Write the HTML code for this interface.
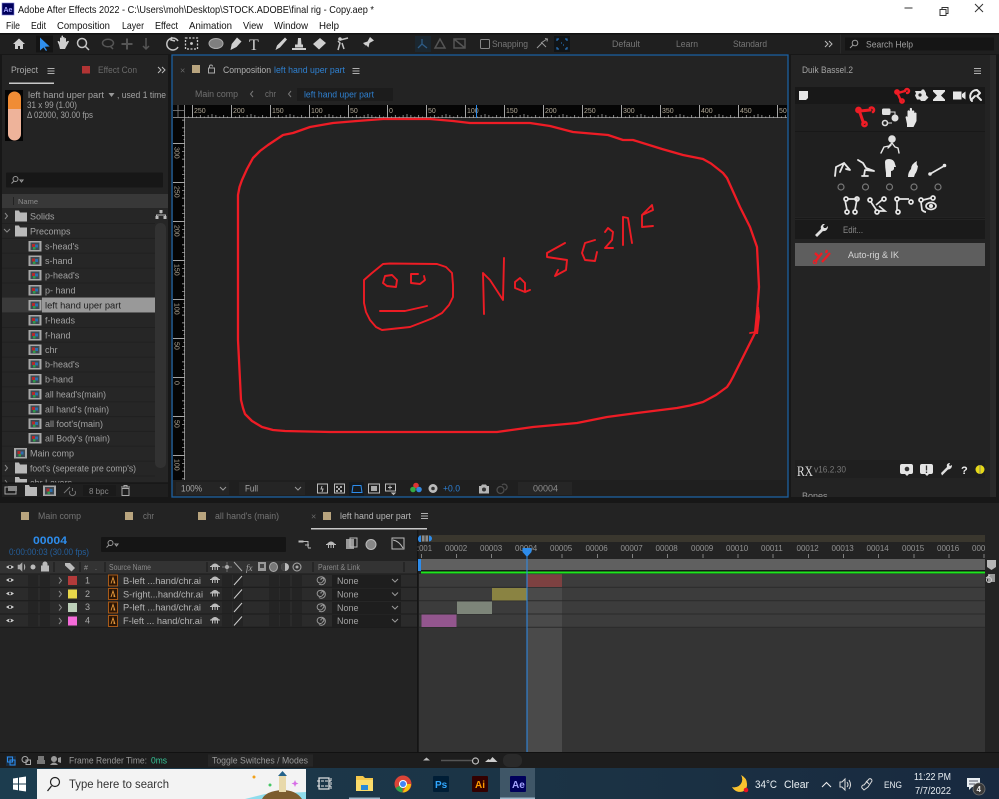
<!DOCTYPE html>
<html><head><meta charset="utf-8"><title>After Effects</title>
<style>
html,body{margin:0;padding:0;background:#1a1a1a;width:999px;height:799px;overflow:hidden}
svg{display:block;filter:blur(.3px)}
text{font-family:"Liberation Sans",sans-serif;font-size:9px;fill:#a2a2a2;white-space:pre}
.m{font-size:10.500px;fill:#111}
.d{fill:#6a6a6a}
.b{fill:#2d8ceb}
.w{fill:#c8c8c8}
.r{font-size:7px;fill:#b0a795}
.ti{font-size:8px;fill:#929292}
.i{fill:none;stroke:#c4c4c4;stroke-width:1.500}
.dim{fill:none;stroke:#555;stroke-width:1.500}
.f{fill:#cfcfcf}
.ic{fill:none;stroke:#e6e6e6;stroke-width:2;stroke-linecap:round;stroke-linejoin:round}
.red{fill:none;stroke:#ee1c25;stroke-width:2.400;stroke-linecap:round;stroke-linejoin:round}
.out{fill:none;stroke:#ee1c25;stroke-width:2.300;stroke-linecap:round;stroke-linejoin:round}
.sk{fill:none;stroke:#ed1c24;stroke-width:1.900;stroke-linejoin:round;stroke-linecap:round}
</style></head><body>
<svg xmlns="http://www.w3.org/2000/svg" width="999" height="799" viewBox="0 0 999 799">
<defs>
<g id="comp"><rect width="13" height="10.500" fill="#a8a8a8"/><rect x="2" y="1.500" width="9" height="7.500" fill="#3f4a52"/><rect x="3.500" y="3" width="3" height="3" fill="#b52a2a"/><rect x="6.500" y="3.500" width="3" height="3" fill="#2b6fb0"/><rect x="4.500" y="6" width="2.500" height="2.500" fill="#2f9a48"/></g>
<g id="folder"><path d="M0 0h4l1 2h7v9H0z" fill="#b9b9b9"/></g>
<g id="ham"><path d="M0 .5h7M0 3h7M0 5.500h7" stroke="#b0b0b0" stroke-width="1"/></g>
<g id="eye"><path d="M-4 0Q0-3.500 4 0Q0 3.500-4 0z" fill="#cfcfcf"/><circle r="1.200" fill="#222"/></g>
<g id="ai"><rect x="-4.500" y="-5.500" width="9" height="11" fill="#2a1505" stroke="#a85a18"/><path d="M-2 3L0-3L2 3M1 0v3" stroke="#e79a3c" stroke-width=".9" fill="none"/></g>
<g id="shy"><path d="M-4 0Q0-5 4 0z" fill="#bbb"/><path d="M-5 .5h10M-2.500 1v3M0 1v3M2.500 1v3" stroke="#bbb" fill="none"/></g>
<g id="spiral"><path d="M-1 0a1.500 1.500 0 1 1 2 1a3 3 0 1 1-3-4a4 4 0 1 1-1 7" fill="none" stroke="#999" stroke-width="1"/></g>
<g id="chev"><path d="M-3-1.500L0 1.500L3-1.500" fill="none" stroke="#999"/></g>
<pattern id="hr" x="192" y="105" width="39" height="13" patternUnits="userSpaceOnUse"><path d="M.5 0v13" stroke="#ccc" stroke-width=".8"/><path d="M8.300 10v3M16.100 10v3M23.900 10v3M31.700 10v3M4.400 11.500v1.500M12.200 11.500v1.500M20 9v4M27.800 11.500v1.500M35.600 11.500v1.500" stroke="#bbb" stroke-width=".7"/></pattern>
<pattern id="vr" x="172" y="143" width="13" height="39" patternUnits="userSpaceOnUse"><path d="M0 .5h13" stroke="#ccc" stroke-width=".8"/><path d="M10 8.300h3M10 16.100h3M10 23.900h3M10 31.700h3M11.500 4.400h1.500M11.500 12.200h1.500M11.500 27.800h1.500M11.500 35.600h1.500" stroke="#bbb" stroke-width=".7"/></pattern>
</defs>

<!-- base -->
<rect width="999" height="799" fill="#171717"/>

<!-- title + menu -->
<rect width="999" height="33" fill="#fff"/>
<rect x="2" y="3" width="12" height="12" fill="#00005b" stroke="#7d7dd8" stroke-width=".6"/>
<text x="3.500" y="12" style="font-size:7px;fill:#a5a5ff;font-weight:bold">Ae</text>
<text x="18" y="13" textLength="356" lengthAdjust="spacingAndGlyphs" style="font-size:10.500px;fill:#111">Adobe After Effects 2022 - C:\Users\moh\Desktop\STOCK.ADOBE\final rig - Copy.aep *</text>
<text class="m" x="6" y="29" textLength="14" lengthAdjust="spacingAndGlyphs">File</text>
<text class="m" x="31" y="29" textLength="15" lengthAdjust="spacingAndGlyphs">Edit</text>
<text class="m" x="57" y="29" textLength="53" lengthAdjust="spacingAndGlyphs">Composition</text>
<text class="m" x="122" y="29" textLength="22" lengthAdjust="spacingAndGlyphs">Layer</text>
<text class="m" x="155" y="29" textLength="23" lengthAdjust="spacingAndGlyphs">Effect</text>
<text class="m" x="189" y="29" textLength="43" lengthAdjust="spacingAndGlyphs">Animation</text>
<text class="m" x="243" y="29" textLength="20" lengthAdjust="spacingAndGlyphs">View</text>
<text class="m" x="274" y="29" textLength="34" lengthAdjust="spacingAndGlyphs">Window</text>
<text class="m" x="319" y="29" textLength="20" lengthAdjust="spacingAndGlyphs">Help</text>
<path d="M904.500 8h8" stroke="#333" stroke-width="1"/>
<path d="M940 9.500h6v6h-6zM942 9.500v-2h6v6h-2" fill="none" stroke="#333" stroke-width="1"/>
<path d="M975 4l8 8M983 4l-8 8" stroke="#333" stroke-width="1"/>

<!-- toolbar -->
<rect y="33" width="999" height="1.500" fill="#111"/>
<rect y="34.500" width="999" height="19.500" fill="#1f1f1f"/>
<path d="M13 44l6-5.500l6 5.500h-2v5h-3v-3h-2v3h-3v-5z" class="f"/>
<rect x="36" y="35.500" width="17" height="17" fill="#141414"/>
<path d="M40 37.500v13l3.500-3l2.500 3.500l1-.8l-2.300-3.500l5-.2z" fill="#2f8fee"/>
<path d="M59 45l-1.500-3.500q1-1 2 0l.5 1v-4.500q1-1 1.500 0v-2q1-1 1.500 0v1.500q1-1 1.500 0v1q1-1 1.500 0v3.500l1.500-1q1-.5 1.500.5l-3 5.500l-1 2h-5z" class="f"/>
<circle cx="82" cy="43" r="4.500" class="i"/><path d="M85.500 46.500l3.500 3.500" class="i"/>
<ellipse cx="108" cy="43" rx="5.500" ry="3.800" class="dim"/><path d="M110 46l3 3" class="dim"/>
<path d="M127 38.500v11M121.500 44h11" stroke="#555" stroke-width="2"/>
<path d="M146 38v11M143 46l3 3l3-3" class="dim"/>
<path d="M178 41a6 6 0 1 0 0 6M172 37l-1 3l4 1" class="i"/>
<rect x="185.500" y="38" width="12" height="11" fill="none" stroke="#ccc" stroke-width="1.300" stroke-dasharray="2 1.500"/><circle cx="191.500" cy="43.500" r="1.400" class="f"/>
<ellipse cx="216" cy="43.500" rx="7" ry="5" fill="#7f7f7f" stroke="#aaa"/>
<path d="M230.500 50l1.200-6l5.300-6.500l4.500 4l-5 5.500z" class="f"/>
<text x="249" y="50" style="font-size:16px;fill:#cfcfcf;font-family:'Liberation Serif',serif">T</text>
<path d="M275.500 50l1.500-4.500l8-8l2 2l-7 8z" class="f"/>
<path d="M292 48h14v2h-14zM295 47.500v-3h8v3zM297.500 45l.5-7h3l.5 7z" class="f"/>
<path d="M313 44l7-6l6 5l-7 6.500z" class="f"/>
<path d="M338 50l2-7l-2-2M342 43l2 6M340 40l8-2" class="i"/><circle cx="340" cy="39" r="1.800" class="f"/>
<path d="M362 50l3.500-4.500l-2.500-2.500l4.500-1.500l2.500-4.500l4 3.500l-4.500 2.500l-1 4.500l-2.500-2.500z" class="f"/>
<rect x="415" y="36" width="16" height="16" fill="#1b2730"/>
<path d="M422 39v5l-4 4M422 44l5 4" fill="none" stroke="#2e5c86" stroke-width="1.300"/>
<path d="M440 39l-5 9h10z" class="dim"/><path d="M454 39h11v9h-11zM454 39l11 9" class="dim"/>
<rect x="480.500" y="39.500" width="9" height="9" fill="none" stroke="#888" stroke-width="1" rx="1"/>
<text x="492" y="47" textLength="36" lengthAdjust="spacingAndGlyphs" style="fill:#777">Snapping</text>
<path d="M537 48l5-5l4 4M541 43l6-4" fill="none" stroke="#999"/><path d="M545 38.500l2.500.5l-.5 2.500" fill="none" stroke="#999"/>
<rect x="554" y="36" width="16" height="16" fill="#101417"/>
<path d="M557 41v-2h2M567 41v-2h-2M557 47v2h2M567 47v2h-2" fill="none" stroke="#2d7fd0"/><path d="M561 43h1M563 45h1" stroke="#2d7fd0"/>
<text x="612" y="47" textLength="28" lengthAdjust="spacingAndGlyphs" style="fill:#767676">Default</text>
<text x="676" y="47" textLength="22" lengthAdjust="spacingAndGlyphs" style="fill:#767676">Learn</text>
<text x="733" y="47" textLength="34" lengthAdjust="spacingAndGlyphs" style="fill:#767676">Standard</text>
<path d="M825 41l3 3l-3 3M829 41l3 3l-3 3" fill="none" stroke="#bbb"/>
<rect x="840" y="34.500" width="1" height="19" fill="#2a2a2a"/>
<rect x="845" y="37.500" width="149" height="13" fill="#151515"/>
<circle cx="855" cy="43" r="2.800" fill="none" stroke="#999"/><path d="M853 45l-3 3" stroke="#999"/>
<text x="866" y="47.500" textLength="47" lengthAdjust="spacingAndGlyphs" style="fill:#a0a0a0">Search Help</text>

<!-- project panel -->
<rect x="2" y="55" width="166" height="442" fill="#232323"/>
<text x="11" y="73" textLength="27" lengthAdjust="spacingAndGlyphs" style="fill:#aaa">Project</text>
<use href="#ham" x="47.500" y="68"/>
<rect x="9" y="82.500" width="45" height="1.500" fill="#c8c8c8"/>
<rect x="82" y="66" width="8" height="7.500" fill="#b13434"/>
<text x="98" y="73" textLength="39" lengthAdjust="spacingAndGlyphs" class="d">Effect Con</text>
<path d="M158 67l3 3l-3 3M162 67l3 3l-3 3" fill="none" stroke="#bbb"/>
<rect x="5" y="90" width="18" height="51" fill="#050505"/>
<path d="M8 109v-11a6.500 6.500 0 0 1 13 0v11z" fill="#f08c35"/>
<path d="M8 109h13v25a6.500 6.500 0 0 1-13 0z" fill="#eeb39a"/>
<text x="28" y="98" textLength="76" lengthAdjust="spacingAndGlyphs">left hand uper part</text>
<path d="M108.500 93l6 0l-3 4z" fill="#999"/>
<text x="117" y="98" textLength="49" lengthAdjust="spacingAndGlyphs">, used 1 time</text>
<text x="27" y="108" textLength="50" lengthAdjust="spacingAndGlyphs">31 x 99 (1.00)</text>
<text x="27" y="118" textLength="66" lengthAdjust="spacingAndGlyphs">Δ 02000, 30.00 fps</text>
<rect x="6" y="172.500" width="157" height="15" fill="#171717" rx="1"/>
<circle cx="15.500" cy="179" r="2.500" fill="none" stroke="#999"/><path d="M14 181l-2.500 2.500M20 180h3l-1.500 2z" stroke="#999" fill="none"/>
<rect x="2" y="194" width="166" height="14" fill="#383838"/>
<rect x="13" y="197" width="1" height="8" fill="#222"/>
<text x="18" y="204" style="font-size:7.500px;fill:#8a8a8a">Name</text>
<!-- project rows -->
<rect x="2" y="208" width="166" height="275" fill="#262626"/>
<path d="M2 223.500H155M2 238.400H155M2 253.200H155M2 268.100H155M2 283H155M2 297.800H155M2 312.600H155M2 327.500H155M2 342.300H155M2 357.200H155M2 372H155M2 386.900H155M2 401.700H155M2 416.600H155M2 431.400H155M2 446.300H155M2 461.100H155M2 476H155" stroke="#202020" stroke-width="1"/>
<rect x="2" y="297.500" width="153" height="15" fill="#3a3a3a"/>
<rect x="42" y="297.500" width="113" height="15" fill="#999"/>
<path d="M5 213l2.500 3l-2.500 3M4 229l3 3l3-3M5 465l2.500 3l-2.500 3" fill="none" stroke="#888"/>
<use href="#folder" x="15" y="210.500"/><use href="#folder" x="15" y="225.500"/>
<text x="30" y="219.500">Solids</text>
<text x="30" y="234.500">Precomps</text>
<use href="#comp" x="28.500" y="241"/><text x="45" y="249.500">s-head's</text>
<use href="#comp" x="28.500" y="255.500"/><text x="45" y="264">s-hand</text>
<use href="#comp" x="28.500" y="270"/><text x="45" y="278.500">p-head's</text>
<use href="#comp" x="28.500" y="285"/><text x="45" y="293.500">p- hand</text>
<use href="#comp" x="28.500" y="300"/><text x="45" y="308.500" textLength="76" lengthAdjust="spacingAndGlyphs" style="fill:#1c1c1c">left hand uper part</text>
<use href="#comp" x="28.500" y="315"/><text x="45" y="323.500">f-heads</text>
<use href="#comp" x="28.500" y="330"/><text x="45" y="338.500">f-hand</text>
<use href="#comp" x="28.500" y="344.500"/><text x="45" y="353">chr</text>
<use href="#comp" x="28.500" y="359"/><text x="45" y="367.500">b-head's</text>
<use href="#comp" x="28.500" y="374"/><text x="45" y="382.500">b-hand</text>
<use href="#comp" x="28.500" y="389"/><text x="45" y="397.500" textLength="61" lengthAdjust="spacingAndGlyphs">all head's(main)</text>
<use href="#comp" x="28.500" y="404"/><text x="45" y="412.500" textLength="64" lengthAdjust="spacingAndGlyphs">all hand's (main)</text>
<use href="#comp" x="28.500" y="418.500"/><text x="45" y="427" textLength="58" lengthAdjust="spacingAndGlyphs">all foot's(main)</text>
<use href="#comp" x="28.500" y="433"/><text x="45" y="441.500" textLength="65" lengthAdjust="spacingAndGlyphs">all Body's (main)</text>
<use href="#comp" x="14" y="448"/><text x="30" y="456.500">Main comp</text>
<use href="#folder" x="15" y="462.500"/><text x="30" y="471.500" textLength="106" lengthAdjust="spacingAndGlyphs">foot's (seperate pre comp's)</text>
<path d="M5 480l2 2.500" stroke="#888"/><use href="#folder" x="15" y="477"/><text x="30" y="486">chr Layers</text>
<rect x="155" y="223" width="11" height="245" fill="#323232" rx="5"/>
<path d="M161 210.500v3M156.500 218v-3h9v3" fill="none" stroke="#bbb"/><rect x="159.500" y="210" width="3" height="3" fill="#bbb"/><rect x="155.500" y="216" width="3" height="3" fill="#bbb"/><rect x="163.500" y="216" width="3" height="3" fill="#bbb"/>
<rect x="2" y="483" width="166" height="14" fill="#1f1f1f"/>
<rect x="2" y="482.500" width="166" height="1" fill="#101010"/>
<rect x="5" y="487" width="11" height="7" fill="none" stroke="#aaa"/><rect x="8" y="486" width="9" height="5" fill="#888"/>
<use href="#folder" x="25" y="485"/>
<use href="#comp" x="43" y="485.500"/>
<path d="M64 493l6-6M70 491a3 3 0 1 0 5 0M72.500 488v3" fill="none" stroke="#777"/>
<rect x="83" y="485" width="33" height="11" fill="#1a1a1a"/>
<text x="89" y="494" style="font-size:8px;fill:#888">8 bpc</text>
<path d="M121 487h9M122 488.500h7v7h-7zM124 487v-1.500h3v1.500" fill="none" stroke="#aaa"/>

<!-- comp panel -->
<rect x="172" y="55" width="616" height="442" fill="#232323" stroke="#1d5f9f" stroke-width="1.300"/>
<text x="180" y="73.500" class="d">×</text>
<rect x="192" y="65" width="8" height="8" fill="#b8a47e"/>
<path d="M208.500 68v5h6v-5zM209.500 68v-1.500a1.500 1.500 0 0 1 3 0" fill="none" stroke="#aaa"/>
<text x="223" y="73" textLength="48" lengthAdjust="spacingAndGlyphs" style="fill:#b0b0b0">Composition</text>
<text x="274" y="73" textLength="71" lengthAdjust="spacingAndGlyphs" style="fill:#2f80d0">left hand uper part</text>
<use href="#ham" x="352.500" y="68"/>
<text x="195" y="97" textLength="43" lengthAdjust="spacingAndGlyphs" style="fill:#707070">Main comp</text>
<path d="M253 91l-2.500 3l2.500 3M291 91l-2.500 3l2.500 3" fill="none" stroke="#777"/>
<text x="265" y="97" textLength="11" lengthAdjust="spacingAndGlyphs" style="fill:#707070">chr</text>
<rect x="297" y="88" width="96" height="13" fill="#1c1c1c"/>
<text x="304" y="97.500" textLength="70" lengthAdjust="spacingAndGlyphs" style="fill:#2f80d0">left hand uper part</text>
<!-- rulers -->
<rect x="173" y="105" width="614" height="13" fill="#050505"/>
<rect x="173" y="118" width="12" height="362" fill="#050505"/>
<rect x="185" y="105" width="602" height="13" fill="url(#hr)"/>
<rect x="173" y="118" width="12" height="362" fill="url(#vr)"/>
<path d="M173 117.500h614M184.500 105v375" stroke="#aaa" stroke-width=".8"/>
<path d="M178 105v13M173 110.500h12" stroke="#888" stroke-width=".8"/>
<text class="r" x="194" y="113">250</text><text class="r" x="233" y="113">200</text><text class="r" x="272" y="113">150</text><text class="r" x="311" y="113">100</text><text class="r" x="350" y="113">50</text><text class="r" x="389" y="113">0</text><text class="r" x="428" y="113">50</text><text class="r" x="467" y="113">100</text><text class="r" x="506" y="113">150</text><text class="r" x="545" y="113">200</text><text class="r" x="584" y="113">250</text><text class="r" x="623" y="113">300</text><text class="r" x="662" y="113">350</text><text class="r" x="701" y="113">400</text><text class="r" x="740" y="113">450</text><text class="r" x="779" y="113">50</text>
<path d="M476.500 105v13" stroke="#2d8ceb"/>
<text class="r" transform="translate(174.500 147) rotate(90)">300</text>
<text class="r" transform="translate(174.500 186) rotate(90)">250</text>
<text class="r" transform="translate(174.500 225) rotate(90)">200</text>
<text class="r" transform="translate(174.500 264) rotate(90)">150</text>
<text class="r" transform="translate(174.500 303) rotate(90)">100</text>
<text class="r" transform="translate(174.500 342) rotate(90)">50</text>
<text class="r" transform="translate(174.500 381) rotate(90)">0</text>
<text class="r" transform="translate(174.500 420) rotate(90)">50</text>
<text class="r" transform="translate(174.500 459) rotate(90)">100</text>
<!-- sketch -->
<path class="out" d="M238 340L238 195L239.500 187L242 180L247 169L253 158L260 151L268 145L283 135L293 133L310 127L333 123L357 121L383 119L430 119L453 121L470 123L530 123L550 126L573 132L608 135L623 140L633 140L662 149L683 155L703 159L711 163.500L718 169L723 173L727 178L740 207L750 227L757 247L759 287L757 313L755 333L733 377L730 382.500L727 387L716 395L703 402L690 405.500L677 408L637 413L607 417L577 423L533 427L497 432L330 432L285 431L273 430L262 427L252 421L245 414L243 408L241 400L238 340"/>
<path d="M757 307l2 0l1 10l-2 17h-3z" fill="#ed1c24"/><path d="M750 333l6-1" class="sk"/>
<path class="sk" d="M364 280L372 273L383 264L390 263.500L437 264L446 267L452 273L453 285L453 297L449 305L442 313L433 318L423 322L410 327L382 330L376 327L370 320L366 312L364 303L364 290Z"/>
<path class="sk" d="M380 311L405 311L427 306M383 283L385 276L392 275L397 280L396 287L387 286L383 283M411 274L411 283L420 284L425 280L424 276M411 274L418 274"/>
<path class="sk" d="M484 314L483 273L490 280L503 300L504 258"/>
<path class="sk" d="M525 292L520 290L515 288L515 282L520 278L525 283L525 292L530 290"/>
<path class="sk" d="M565 243L547 253L547 257L567 260L566 270L555 276L558 270"/>
<path class="sk" d="M595 240L585 243L582 253L585 260L595 261L597 252"/>
<path class="sk" d="M605 232L608 228L613 232L612 240L605 248L613 248"/>
<path class="sk" d="M623 245L623 217L628 218L632 243"/>
<path class="sk" d="M653 226L642 227L642 215L652 205L653 210L642 215"/>
<!-- comp footer -->
<rect x="173" y="480" width="614" height="16" fill="#1f1f1f"/>
<rect x="176" y="482" width="53" height="13" fill="#252525"/>
<text x="181" y="491.500" textLength="21" lengthAdjust="spacingAndGlyphs" style="fill:#a8a8a8">100%</text>
<use href="#chev" x="223" y="488.500"/>
<rect x="239" y="482" width="66" height="13" fill="#252525"/>
<text x="245" y="491.500" textLength="13" lengthAdjust="spacingAndGlyphs" style="fill:#a8a8a8">Full</text>
<use href="#chev" x="298" y="488.500"/>
<rect x="317.500" y="484" width="10" height="9" fill="none" stroke="#bbb"/><path d="M322 486l-1 3h2l-1 3" stroke="#bbb" fill="none"/>
<rect x="334.500" y="484" width="10" height="9" fill="none" stroke="#bbb"/><path d="M336 486h2v2h-2zM340 486h2v2h-2zM338 488h2v2h-2zM342 490h-2v2h2zM336 490h2v2h-2z" fill="#aaa"/>
<rect x="349" y="482" width="15" height="14" fill="#151a1f"/><path d="M352 492.500l1-7h8l1 7z" fill="none" stroke="#2d8ceb"/>
<rect x="368.500" y="484" width="11" height="9" fill="none" stroke="#bbb"/><rect x="371" y="486" width="6" height="5" fill="#aaa"/>
<rect x="385.500" y="484" width="10" height="7" fill="none" stroke="#bbb"/><path d="M390 485.500v4M388 487.500h4M392 493h3l-1.500 1.500z" stroke="#bbb" fill="none"/>
<circle cx="416" cy="485.500" r="2.800" fill="#d33"/><circle cx="413" cy="489.500" r="2.800" fill="#3a4"/><circle cx="419" cy="489.500" r="2.800" fill="#38d"/>
<circle cx="433" cy="488.500" r="4.500" fill="#bbb"/><circle cx="433" cy="488.500" r="1.800" fill="#333"/>
<text x="443" y="491.500" textLength="17" lengthAdjust="spacingAndGlyphs" style="fill:#2d80d5">+0.0</text>
<path d="M479 486h2l1-1.500h4l1 1.500h2v7.500h-10z" fill="#b5b5b5"/><circle cx="484" cy="489.500" r="2" fill="#333"/>
<path d="M497 490a3.500 3.500 0 1 0 7 0a3.500 3.500 0 1 0-7 0M502 485a3 3 0 1 1 3 5" fill="none" stroke="#4c4c4c" stroke-width="1.300"/>
<rect x="518" y="482" width="54" height="13" fill="#262626"/>
<text x="533" y="491.500" textLength="25" lengthAdjust="spacingAndGlyphs" style="fill:#8c8c8c">00004</text>

<!-- Duik panel -->
<rect x="791" y="55" width="199" height="442" fill="#232323"/>
<rect x="990" y="55" width="6" height="442" fill="#2a2a2a"/>
<text x="802" y="73" textLength="51" lengthAdjust="spacingAndGlyphs" style="fill:#a4a4a4">Duik Bassel.2</text>
<use href="#ham" x="974" y="68"/>
<rect x="795" y="87" width="190" height="17" fill="#181818"/>
<rect x="795" y="104" width="190" height="28" fill="#1f1f1f"/>
<rect x="795" y="132" width="190" height="85" fill="#1f1f1f"/>
<rect x="795" y="131" width="190" height="1" fill="#181818"/>
<rect x="795" y="218" width="190" height="1" fill="#181818"/>
<path d="M799 91h9v7l-2 2h-7z" fill="#e6e6e6"/>
<!-- red bone icons -->
<path class="red" d="M897 92l4 9M898 93l7-2"/><circle cx="897" cy="92" r="1.700" class="red"/><circle cx="902" cy="101" r="1.700" class="red"/><path class="red" d="M905 91a2 2 0 1 1 2 2"/>
<path d="M915 91h6l1-1.500h2l2 3.500v2l2.500 2.500l-3.500 3.500h-4l-1-1.500h-3l-2-4l1-2z" fill="#e0e0e0"/><circle cx="920" cy="95" r="1.600" fill="#222"/>
<path d="M933 90h12v1.500l-4 4l4 4v1.500h-12v-1.500l4-4l-4-4z" fill="#e6e6e6"/>
<path d="M953 91.500h8.500v8h-8.500zM962 94l3.500-2.500v8l-3.500-2.500z" fill="#e6e6e6"/>
<path d="M972 101a6.500 6.500 0 0 1 5-11l3 3l-3 3l4 4M975 96l-4 4" class="ic"/>
<path class="red" style="stroke-width:3" d="M859 110l4.500 13M860 111l10-1"/><circle cx="858.500" cy="110" r="2.200" class="red"/><circle cx="864.500" cy="124" r="2.200" class="red"/><path class="red" style="stroke-width:2.600" d="M870 108a2.500 2.500 0 1 1 3 4"/>
<rect x="882" y="108.500" width="8.500" height="6.500" rx="1.500" fill="#e0e0e0"/><path d="M890 112h5v3" stroke="#ddd" fill="none"/><circle cx="895" cy="118" r="3.500" fill="#e0e0e0"/><circle cx="885" cy="123" r="2.500" fill="none" stroke="#ddd" stroke-width="1.600"/><path d="M888 123h4" stroke="#ddd"/>
<path d="M907 124l-1.500-7q1-1.500 2 0v-6q1-1.500 2.300 0v-2.500q1-1.200 2.200 0v2.500q1-1.200 2.300 0v2q1-1 2.200 0v8l-3 6h-6.500z" fill="#e6e6e6"/>
<!-- skeleton row -->
<circle cx="892" cy="139" r="3.800" fill="#e0e0e0"/><path d="M881 153l3-6l5-1l3-3l3 4l3 1l1 5M888 148l3-3" class="ic" style="stroke-width:1.400"/>
<path d="M835 176l1-9l8-4l-4 9M844 163l6 7l-4-1" class="ic" style="stroke-width:1.800"/>
<path d="M858 160l5 3l3 5l8 3l-9-1l-1 6M862 176h6" class="ic" style="stroke-width:1.800"/>
<path d="M885 162q0-3 4-3q5 0 6 5l1 3h-2v2q-1 2-3 2v6h-5v-4q-1-6-1-11z" fill="#e6e6e6"/>
<path d="M908 177q0-5 3-8q0-5 6-8q-1 4 1 5q-1 6-3 8l-1 3z" fill="#e6e6e6"/>
<path d="M930 174l14-8" class="ic" style="stroke-width:1.700"/><circle cx="944.500" cy="165.500" r="1.800" fill="#e6e6e6"/><circle cx="930" cy="174" r="1.800" fill="#e6e6e6"/>
<g fill="none" stroke="#777" stroke-width="1.200"><circle cx="841" cy="187" r="3"/><circle cx="865.500" cy="187" r="3"/><circle cx="889.500" cy="187" r="3"/><circle cx="914" cy="187" r="3"/><circle cx="938" cy="187" r="3"/></g>
<g fill="none" stroke="#e6e6e6" stroke-width="1.700"><path d="M845 200l2 10M848 199h9l-2 11"/><circle cx="846" cy="199" r="2"/><circle cx="857" cy="199" r="2"/><circle cx="847" cy="212" r="2"/><circle cx="855" cy="212" r="2"/><circle cx="870" cy="200" r="2"/><circle cx="884" cy="199" r="2"/><circle cx="877" cy="212" r="2"/><path d="M871 202l6 9M882 200l-6 5M879 206l6 5l-6 0"/><circle cx="897" cy="199" r="2"/><circle cx="898" cy="212" r="2"/><circle cx="911" cy="202" r="2"/><path d="M897 201v9M899 199h10"/><circle cx="921" cy="200" r="2"/><circle cx="933" cy="198" r="2"/><path d="M923 200l8-2M921 202l1 8q2 2 4 2"/><ellipse cx="931" cy="206" rx="5" ry="3.500"/><circle cx="931" cy="206" r="1.200" fill="#e6e6e6"/></g>
<!-- edit / autorig -->
<rect x="795" y="220" width="190" height="19" fill="#1a1a1a"/>
<path d="M815 235l6-6q-1-3 2-5l2 0l-2 2l1 2l2 0l2-2q0 3-2 4.500q-2 1-3 .5l-6 6z" fill="#e0e0e0"/>
<text x="843" y="233" textLength="20" lengthAdjust="spacingAndGlyphs" style="fill:#888">Edit...</text>
<rect x="795" y="243" width="190" height="23" fill="#5e5e5e"/>
<path d="M815 262l7-9M822 262l8-9M815 253l3 3M827 250l-1 3" fill="none" stroke="#ed1c24" stroke-width="2.300"/>
<circle cx="815" cy="262" r="1.800" fill="none" stroke="#ed1c24"/>
<text x="848" y="258" textLength="51" lengthAdjust="spacingAndGlyphs" style="fill:#d6d6d6">Auto-rig &amp; IK</text>
<!-- footer duik -->
<rect x="795" y="460" width="190" height="18" fill="#1f1f1f"/>
<text x="797" y="476" textLength="16" lengthAdjust="spacingAndGlyphs" style="font-size:15px;font-family:'Liberation Serif',serif;fill:#dedede">RX</text>
<text x="814" y="472.500" textLength="32" lengthAdjust="spacingAndGlyphs" style="font-size:9.500px;fill:#777">v16.2.30</text>
<path d="M902 464h9q2 0 2 2v6q0 2-2 2h-2l-2 2l-2-2h-3q-2 0-2-2v-6q0-2 2-2z" fill="#e4e4e4"/><circle cx="907" cy="469" r="2.300" fill="#333"/>
<path d="M922 464h9q2 0 2 2v6q0 2-2 2h-2l-2 2l-2-2h-3q-2 0-2-2v-6q0-2 2-2z" fill="#e4e4e4"/><path d="M926.500 465.500v5M926.500 471.500v1.500" stroke="#333" stroke-width="1.300"/>
<path d="M941 473l6-6q-1-3 2-4l1 0l-1 2l1 1l2-1q0 3-2 4q-1 .5-2 .5l-6 6z" fill="#e0e0e0"/>
<text x="961" y="474" style="font-size:11px;font-weight:bold;fill:#eee">?</text>
<circle cx="980" cy="469.500" r="4.500" fill="#e6d918"/><path d="M980 465v9" stroke="#777" stroke-width=".8"/>
<text x="802" y="499" style="fill:#9a9a9a">Bones</text>
<rect x="791" y="497" width="208" height="6" fill="#171717"/>

<!-- timeline -->
<rect y="503" width="999" height="249" fill="#232323"/>
<rect y="753" width="999" height="15" fill="#1d1d1d"/>
<rect y="752" width="999" height="1" fill="#111"/>
<rect x="21" y="512" width="8" height="8" fill="#b8a47e"/><rect x="125" y="512" width="8" height="8" fill="#b8a47e"/><rect x="198" y="512" width="8" height="8" fill="#b8a47e"/><rect x="323" y="512" width="8" height="8" fill="#b8a47e"/>
<text x="38" y="519" textLength="43" lengthAdjust="spacingAndGlyphs" style="fill:#757575">Main comp</text>
<text x="143" y="519" textLength="11" lengthAdjust="spacingAndGlyphs" style="fill:#757575">chr</text>
<text x="215" y="519" textLength="64" lengthAdjust="spacingAndGlyphs" style="fill:#757575">all hand's (main)</text>
<text x="311" y="519.500" class="d">×</text>
<text x="340" y="519" textLength="71" lengthAdjust="spacingAndGlyphs" style="fill:#b5b5b5">left hand uper part</text>
<use href="#ham" x="421" y="513"/>
<rect x="311" y="528" width="116" height="1.500" fill="#c8c8c8"/>
<text x="33" y="544" textLength="34" lengthAdjust="spacingAndGlyphs" style="font-size:11px;font-weight:bold;fill:#2d8ceb">00004</text>
<text x="9" y="555" textLength="80" lengthAdjust="spacingAndGlyphs" style="fill:#245f9c">0:00:00:03 (30.00 fps)</text>
<rect x="101" y="537" width="185" height="15" fill="#151515" rx="1"/>
<circle cx="110.500" cy="543" r="2.500" fill="none" stroke="#999"/><path d="M109 545l-2.500 2.500M115 544h3l-1.500 2z" stroke="#999" fill="none"/>
<path d="M299 541h4v1h-4zM303 541.500h5v6M305 545h4M308 548h3" stroke="#bbb" fill="none"/>
<use href="#shy" x="331" y="544"/>
<rect x="346" y="539" width="8" height="10" fill="#999"/><rect x="350" y="538" width="7" height="9" fill="none" stroke="#bbb"/>
<ellipse cx="371" cy="544.500" rx="5" ry="5" fill="#888" stroke="#bbb"/>
<rect x="392" y="538" width="12" height="11" fill="none" stroke="#bbb"/><path d="M393 540q6 1 10 8" stroke="#bbb" fill="none"/>

<!-- column header -->
<rect y="561" width="417" height="13" fill="#333"/>
<use href="#eye" x="10" y="567"/>
<path d="M18 565h2l2-2v8l-2-2h-2zM24 564q2 3 0 6" fill="#aaa" stroke="#aaa" stroke-width=".6"/>
<circle cx="33" cy="567" r="2.500" fill="#bbb"/>
<path d="M41.500 566h7v5h-7zM43 566v-2a2 2 0 0 1 4 0v2" fill="#bbb" stroke="#bbb"/>
<path d="M65 563h5l5 5l-3.500 3.500l-6.500-6z" fill="#bbb"/>
<path d="M54 562v10M80 562v10M105 562v10M207 562v10M313 562v10M404 562v10" stroke="#1a1a1a"/>
<text x="84" y="570" style="font-size:7px;fill:#999">#</text>
<text x="95" y="570" style="font-size:7px;fill:#999">.</text>
<text x="109" y="570" textLength="42" lengthAdjust="spacingAndGlyphs" style="font-size:8px;fill:#8a8a8a">Source Name</text>
<use href="#shy" x="215" y="566"/>
<circle cx="227" cy="567" r="2" fill="#aaa"/><path d="M227 562.500v9M222.500 567h9" stroke="#aaa" stroke-dasharray="1 1"/>
<path d="M234 562l8 9" stroke="#aaa"/>
<text x="246" y="571" style="font-size:9px;font-style:italic;font-family:'Liberation Serif',serif;fill:#aaa">fx</text>
<rect x="258" y="562" width="8" height="9" fill="#999"/><rect x="260" y="564" width="4" height="4" fill="#444"/>
<ellipse cx="273.500" cy="567" rx="4" ry="4.500" fill="#777" stroke="#aaa"/>
<circle cx="285" cy="567" r="4" fill="#bbb"/><path d="M285 563a4 4 0 0 0 0 8z" fill="#444"/>
<circle cx="297" cy="567" r="4" fill="none" stroke="#aaa"/><circle cx="297" cy="567" r="1.500" fill="#aaa"/>
<text x="318" y="570" textLength="42" lengthAdjust="spacingAndGlyphs" style="font-size:8px;fill:#8a8a8a">Parent &amp; Link</text>

<!-- layer rows -->
<rect y="574" width="417" height="53.500" fill="#2b2b2b"/>
<path d="M0 574h417M0 587.300h417M0 600.700h417M0 614h417M0 627.300h417" stroke="#1b1b1b"/>
<g fill="#242424">
<rect x="28" y="575" width="10" height="12"/><rect x="40" y="575" width="10" height="12"/><rect x="222" y="575" width="10" height="12"/><rect x="233" y="575" width="10" height="12"/><rect x="269" y="575" width="10" height="12"/><rect x="280" y="575" width="10" height="12"/><rect x="292" y="575" width="10" height="12"/>
<rect x="28" y="588" width="10" height="12"/><rect x="40" y="588" width="10" height="12"/><rect x="222" y="588" width="10" height="12"/><rect x="233" y="588" width="10" height="12"/><rect x="269" y="588" width="10" height="12"/><rect x="280" y="588" width="10" height="12"/><rect x="292" y="588" width="10" height="12"/>
<rect x="28" y="601.500" width="10" height="12"/><rect x="40" y="601.500" width="10" height="12"/><rect x="222" y="601.500" width="10" height="12"/><rect x="233" y="601.500" width="10" height="12"/><rect x="269" y="601.500" width="10" height="12"/><rect x="280" y="601.500" width="10" height="12"/><rect x="292" y="601.500" width="10" height="12"/>
<rect x="28" y="615" width="10" height="12"/><rect x="40" y="615" width="10" height="12"/><rect x="222" y="615" width="10" height="12"/><rect x="233" y="615" width="10" height="12"/><rect x="269" y="615" width="10" height="12"/><rect x="280" y="615" width="10" height="12"/><rect x="292" y="615" width="10" height="12"/>
</g>
<use href="#eye" x="10" y="580"/><use href="#eye" x="10" y="593.500"/><use href="#eye" x="10" y="607"/><use href="#eye" x="10" y="620.500"/>
<path d="M59 577.500l2.500 3l-2.500 3M59 591l2.500 3l-2.500 3M59 604.500l2.500 3l-2.500 3M59 618l2.500 3l-2.500 3" fill="none" stroke="#888"/>
<rect x="68" y="576" width="9" height="9" fill="#b23a3a"/><rect x="68" y="589.500" width="9" height="9" fill="#e8d84a"/><rect x="68" y="603" width="9" height="9" fill="#bccfb8"/><rect x="68" y="616.500" width="9" height="9" fill="#f56bd9"/>
<text x="85" y="583.500" style="fill:#aaa">1</text><text x="85" y="597" style="fill:#aaa">2</text><text x="85" y="610" style="fill:#aaa">3</text><text x="85" y="623.500" style="fill:#aaa">4</text>
<use href="#ai" x="113" y="580.500"/><use href="#ai" x="113" y="594"/><use href="#ai" x="113" y="607.500"/><use href="#ai" x="113" y="621"/>
<text x="123" y="584" textLength="78" lengthAdjust="spacingAndGlyphs" style="font-size:9.500px;fill:#b4b4b4">B-left ...hand/chr.ai</text>
<text x="123" y="597.500" textLength="80" lengthAdjust="spacingAndGlyphs" style="font-size:9.500px;fill:#b4b4b4">S-right...hand/chr.ai</text>
<text x="123" y="610.500" textLength="78" lengthAdjust="spacingAndGlyphs" style="font-size:9.500px;fill:#b4b4b4">P-left ...hand/chr.ai</text>
<text x="123" y="624" textLength="79" lengthAdjust="spacingAndGlyphs" style="font-size:9.500px;fill:#b4b4b4">F-left ... hand/chr.ai</text>
<use href="#shy" x="215" y="579"/><use href="#shy" x="215" y="592.500"/><use href="#shy" x="215" y="606"/><use href="#shy" x="215" y="619.500"/>
<path d="M234 585l8-9M234 598.500l8-9M234 612l8-9M234 625.500l8-9" stroke="#ccc"/>
<use href="#spiral" x="322" y="580"/><use href="#spiral" x="322" y="593.500"/><use href="#spiral" x="322" y="607"/><use href="#spiral" x="322" y="620.500"/>
<g fill="#1e1e1e"><rect x="332" y="575" width="69" height="12"/><rect x="332" y="588.500" width="69" height="12"/><rect x="332" y="602" width="69" height="12"/><rect x="332" y="615" width="69" height="12"/></g>
<text x="337" y="584">None</text><text x="337" y="597.500">None</text><text x="337" y="611">None</text><text x="337" y="624">None</text>
<use href="#chev" x="395" y="580.500"/><use href="#chev" x="395" y="594"/><use href="#chev" x="395" y="607.500"/><use href="#chev" x="395" y="620.500"/>

<!-- time graph -->
<rect x="417" y="530" width="1.500" height="222" fill="#141414"/>
<rect x="419" y="535" width="566" height="7" fill="#3a372e"/>
<path d="M418 538.500a3 3 0 0 1 3-3v7a3 3 0 0 1-3-3zM429 535.500a3 3 0 0 1 3 3a3 3 0 0 1-3 3z" fill="#2d8ceb"/><rect x="422" y="535.500" width="2.500" height="6" fill="#8a8a8a"/><rect x="425.500" y="535.500" width="2.500" height="6" fill="#8a8a8a"/>
<rect x="419" y="542" width="566" height="16" fill="#232323"/>
<g>
<text class="ti" x="417" y="551" textLength="15" lengthAdjust="spacingAndGlyphs">:001</text>
<text class="ti" x="445" y="551">00002</text><text class="ti" x="480" y="551">00003</text><text class="ti" x="515" y="551">00004</text><text class="ti" x="550" y="551">00005</text><text class="ti" x="585.500" y="551">00006</text><text class="ti" x="620.500" y="551">00007</text><text class="ti" x="655.500" y="551">00008</text><text class="ti" x="691" y="551">00009</text><text class="ti" x="726" y="551">00010</text><text class="ti" x="761" y="551">00011</text><text class="ti" x="796.500" y="551">00012</text><text class="ti" x="831.500" y="551">00013</text><text class="ti" x="866.500" y="551">00014</text><text class="ti" x="902" y="551">00015</text><text class="ti" x="937" y="551">00016</text><text class="ti" x="972" y="551">000</text>
</g>
<path d="M421.500 554v4M456.500 554v4M491.500 554v4M527 554v4M562 554v4M597.500 554v4M632.500 554v4M667.500 554v4M703 554v4M738 554v4M773 554v4M808.500 554v4M843.500 554v4M878.500 554v4M914 554v4M949 554v4M984 554v4" stroke="#999" stroke-width=".8"/>
<rect x="419" y="559" width="566" height="11" fill="#606060"/>
<rect x="418" y="559" width="3" height="12" fill="#2d8ceb"/>
<rect x="421" y="570" width="564" height="1.500" fill="#161616"/>
<rect x="421" y="571.500" width="564" height="2" fill="#1ee61e"/>
<rect x="419" y="574" width="566" height="178" fill="#343434"/>
<rect x="419" y="574" width="566" height="53.500" fill="#3c3c3c"/>
<rect x="527" y="574" width="35" height="178" fill="#4a4a4a"/>
<path d="M419 587.300h566M419 600.700h566M419 614h566M419 627.300h566" stroke="#2a2a2a"/>
<rect x="527" y="574.500" width="35" height="12.500" fill="#7d4141"/>
<rect x="492" y="588" width="35" height="12.500" fill="#8a8342"/>
<rect x="457" y="601.500" width="35" height="12.500" fill="#7d8579"/>
<rect x="421.500" y="614.500" width="35" height="12.500" fill="#93568e"/>
<path d="M527 552v200" stroke="#2d8ceb" stroke-width="1"/>
<path d="M522.500 548h9v4l-4.500 5l-4.500-5z" fill="#2d8ceb"/>
<path d="M987 560h9v7l-4.500 3l-4.500-3z" fill="#b5b5b5"/>
<rect x="988" y="574" width="7" height="8" fill="#999"/><path d="M986 578l4-3" stroke="#ccc"/><circle cx="989" cy="580" r="2.500" fill="none" stroke="#ccc"/>

<!-- status -->
<rect x="6" y="756" width="10" height="10" fill="#1a2d40"/><rect x="7.500" y="757" width="5" height="5" fill="none" stroke="#2d8ceb"/><rect x="10" y="760" width="5" height="5" fill="none" stroke="#2d8ceb"/>
<circle cx="25" cy="759.500" r="3" fill="none" stroke="#aaa"/><rect x="26" y="760" width="4.500" height="4.500" fill="none" stroke="#aaa"/>
<path d="M38 756h6v4h1v4h-8v-4h1z" fill="#777"/>
<circle cx="54" cy="759" r="3" fill="#999"/><path d="M50 765q4-5 8 0zM58 758l3-1v6l-3-1z" fill="#999"/>
<text x="69" y="763.500" textLength="78" lengthAdjust="spacingAndGlyphs" style="fill:#999">Frame Render Time:</text>
<text x="151" y="763.500" textLength="16" lengthAdjust="spacingAndGlyphs" style="fill:#37c89a">0ms</text>
<rect x="208" y="754.500" width="105" height="12" fill="#262626"/>
<text x="212" y="763.500" textLength="96" lengthAdjust="spacingAndGlyphs" style="fill:#999">Toggle Switches / Modes</text>
<path d="M423 760.500l3.500-3l3.500 3z" fill="#bbb"/>
<path d="M441 760.500h34" stroke="#555" stroke-width="1.500"/><circle cx="475.500" cy="761" r="3" fill="#1d1d1d" stroke="#bbb" stroke-width="1.200"/>
<path d="M485 762l3.500-3l1.500 1l2.500-3l5 5z" fill="#ccc"/>
<rect x="503" y="754" width="19" height="13" rx="6" fill="#2a2a2a"/>

<!-- taskbar -->
<defs><linearGradient id="tb" x1="0" x2="1" y1="0" y2="0"><stop offset="0" stop-color="#1c3c4e"/><stop offset=".6" stop-color="#1b3244"/><stop offset="1" stop-color="#18293f"/></linearGradient></defs>
<rect y="768" width="999" height="31" fill="url(#tb)"/>
<path d="M13 778.500l5-.8v5.800h-5zM19 777.500l7-1v7h-7zM13 784.500h5v5.800l-5-.8zM19 784.500h7v7l-7-1z" fill="#fff"/>
<rect x="37" y="769" width="269" height="30" fill="#f3f3f3"/>
<circle cx="55" cy="782" r="4.500" fill="none" stroke="#222" stroke-width="1.200"/><path d="M51.500 786l-4 5" stroke="#222" stroke-width="1.300"/>
<text x="69" y="788" textLength="100" lengthAdjust="spacingAndGlyphs" style="font-size:12px;fill:#333">Type here to search</text>
<path d="M245 799l20-5l41-2v7z" fill="#8fdcec"/>
<path d="M262 799q4-8 20-9q14 0 20 9z" fill="#7c5c2e"/>
<rect x="279" y="776" width="7" height="16" fill="#e8d9ab"/><path d="M278 776l4.500-5l4.500 5z" fill="#24628a"/>
<circle cx="254" cy="777" r="1.500" fill="#f2a11a"/><circle cx="270" cy="785" r="1.500" fill="#45c765"/><path d="M295 780l1 2.500l2.500 1l-2.500 1l-1 2.500l-1-2.500l-2.500-1l2.500-1z" fill="#d76ee6"/>
<rect x="319" y="778" width="10" height="11" fill="none" stroke="#e6e6e6" stroke-width="1.200"/><path d="M317 781h14M317 786h14M331 778v11" stroke="#e6e6e6" fill="none" stroke-dasharray="3 1"/>
<path d="M356 776h7l2 2h8v13h-17z" fill="#f5c84b"/><rect x="356" y="780" width="17" height="11" fill="#fbdc6b"/><rect x="361" y="785" width="7" height="5" fill="#2a89d8"/>
<rect x="349" y="797.500" width="31" height="1.500" fill="#9db7c9"/>
<circle cx="403" cy="784" r="8.500" fill="#db4437"/><path d="M403 784l-7.500 4a8.500 8.500 0 0 0 7 4.500z" fill="#2fa24a"/><path d="M403 784l8 0a8.500 8.500 0 0 1-8.500 8.500l3-5z" fill="#f4c20d"/><circle cx="403" cy="784" r="4" fill="#fff"/><circle cx="403" cy="784" r="3" fill="#4285f4"/>
<rect x="433" y="776" width="16" height="16" fill="#001e36" rx="1"/><text x="435" y="788" style="font-size:10px;font-weight:bold;fill:#31a8ff">Ps</text>
<rect x="472" y="776" width="16" height="16" fill="#330000" rx="1"/><text x="475" y="788" style="font-size:10px;font-weight:bold;fill:#ff9a00">Ai</text>
<rect x="500" y="768" width="35" height="31" fill="#3f5667"/>
<rect x="510" y="776" width="16" height="16" fill="#00005b" rx="1"/><text x="512" y="788" style="font-size:10px;font-weight:bold;fill:#a5a5ff">Ae</text>
<rect x="500" y="797.500" width="35" height="1.500" fill="#9db7c9"/>
<path d="M741 775a8 8 0 0 1-9 12a9 9 0 0 0 12 4a8 8 0 0 0 3-7q0-6-6-9z" fill="#f9c22e"/><circle cx="746" cy="790" r="2.300" fill="#e81123"/>
<text x="755" y="788" textLength="22" lengthAdjust="spacingAndGlyphs" style="font-size:11px;fill:#e8eef2">34°C</text>
<text x="784" y="788" textLength="25" lengthAdjust="spacingAndGlyphs" style="font-size:11px;fill:#e8eef2">Clear</text>
<path d="M822 787l4.500-4.500l4.500 4.500" fill="none" stroke="#eee" stroke-width="1.100"/>
<path d="M840 782h2l3-3v11l-3-3h-2zM847 782q2 3 0 5M849 780q3 5 0 9" fill="none" stroke="#ddd"/>
<path d="M862 788a2 2 0 0 1 2-3l5-6a2 2 0 0 1 3 2l-4 6l-4 3zM866 781l3 3" fill="none" stroke="#ddd"/>
<text x="884" y="788" textLength="18" lengthAdjust="spacingAndGlyphs" style="font-size:9.500px;fill:#e8eef2">ENG</text>
<text x="914" y="780" textLength="37" lengthAdjust="spacingAndGlyphs" style="font-size:10px;fill:#e8eef2">11:22 PM</text>
<text x="915" y="794" textLength="36" lengthAdjust="spacingAndGlyphs" style="font-size:10px;fill:#e8eef2">7/7/2022</text>
<path d="M967 778h13v9h-8l-3 3v-3h-2z" fill="#e8eef2"/><path d="M969 781h9M969 784h6" stroke="#556"/>
<circle cx="979" cy="789" r="6" fill="#3a3a3a" stroke="#777" stroke-width=".8"/><text x="976.500" y="792" style="font-size:8px;font-weight:bold;fill:#eee">4</text>
</svg>
</body></html>
